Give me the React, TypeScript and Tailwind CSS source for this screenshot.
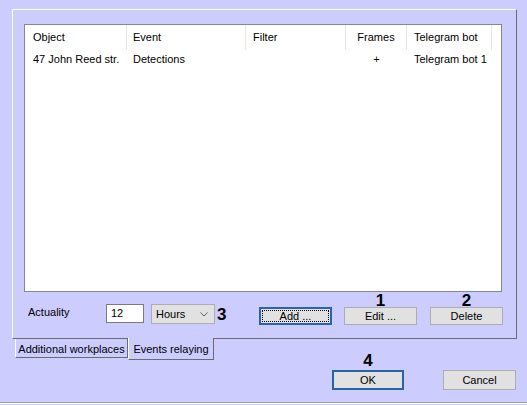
import React from 'react'

const columns = [
  { title: 'Object', width: 'w-[102px]', align: 'pl-[8px] text-left' },
  { title: 'Event', width: 'w-[119px]', align: 'pl-[6px] text-left' },
  { title: 'Filter', width: 'w-[100px]', align: 'pl-[7px] text-left' },
  { title: 'Frames', width: 'w-[61px]', align: 'text-center' },
  { title: 'Telegram bot', width: 'w-[85px]', align: 'pl-[7px] text-left' },
]

const rows = [['47 John Reed str.', 'Detections', '', '+', 'Telegram bot 1']]

function Marker({ n, top }: { n: string; top: string }) {
  return (
    <span
      className={`absolute left-1/2 -translate-x-1/2 ${top} text-[17px] font-bold leading-none text-black`}
    >
      {n}
    </span>
  )
}

function Btn({
  label,
  focused,
  dotted,
}: {
  label: string
  focused?: boolean
  dotted?: boolean
}) {
  return (
    <button
      type="button"
      className={`relative h-full w-full bg-[#e1e1e1] text-[11px] leading-none text-black ${
        focused
          ? 'border border-[#2a64a8] shadow-[inset_0_0_0_1px_#2a64a8]'
          : 'border border-[#adadad]'
      }`}
    >
      {dotted && (
        <span className="absolute inset-[2px] border border-dotted border-black" />
      )}
      {label}
    </button>
  )
}

export default function App() {
  return (
    <div className="flex h-[405px] w-[527px] flex-col overflow-hidden bg-[#ccccff] font-['Liberation_Sans',Arial,sans-serif] text-[11px] text-black">
      {/* tab page */}
      <div className="ml-[12px] mt-[9px] flex h-[330px] w-[505px] flex-col border-b border-l border-r border-t border-b-[#6b6b6b] border-l-white border-r-[#6b6b6b] border-t-white pl-[11px] pt-[14px]">
        {/* list view */}
        <div className="h-[268px] w-[478px] border border-[#828790] bg-white">
          <div className="flex h-[25px] items-center">
            {columns.map((c) => (
              <div
                key={c.title}
                className={`${c.width} ${c.align} flex h-full shrink-0 items-center border-r border-[#e5e5e5] ${
                  c.align.includes('center') ? 'justify-center' : ''
                }`}
              >
                {c.title}
              </div>
            ))}
          </div>
          {rows.map((r, i) => (
            <div key={i} className="flex h-[18px] items-center">
              {r.map((cell, j) => (
                <div
                  key={j}
                  className={`${columns[j].width} ${columns[j].align} shrink-0 whitespace-nowrap`}
                >
                  {cell}
                </div>
              ))}
            </div>
          ))}
        </div>

        {/* controls */}
        <div className="mt-[12px] flex h-[21px] items-start">
          <span className="ml-[4px] h-[17px] w-[78px] leading-[17px]">Actuality</span>
          <div className="flex h-[19px] w-[38px] items-center border border-[#7a7a7a] bg-white pl-[4px]">
            12
          </div>
          <div className="ml-[7px] flex h-[20px] w-[64px] items-center justify-between border border-[#adadad] bg-[#e1e1e1] pl-[4px] pr-[6px]">
            <span>Hours</span>
            <svg width="8" height="5" viewBox="0 0 8 5" fill="none">
              <polyline points="0.5,0.5 4,4 7.5,0.5" stroke="#606060" strokeWidth="1" />
            </svg>
          </div>
          <span className="ml-[2px] mt-[2px] w-[10px] text-[17px] font-bold leading-none">3</span>
          <div className="ml-[32px] mt-[3px] h-[18px] w-[73px]">
            <Btn label="Add ..." focused dotted />
          </div>
          <div className="relative ml-[12px] mt-[3px] h-[18px] w-[73px]">
            <Marker n="1" top="-top-[15px]" />
            <Btn label="Edit ..." />
          </div>
          <div className="relative ml-[13px] mt-[3px] h-[18px] w-[73px]">
            <Marker n="2" top="-top-[15px]" />
            <Btn label="Delete" />
          </div>
        </div>
      </div>

      {/* tabs */}
      <div className="ml-[15px] flex items-start">
        <div className="flex h-[19px] w-[113px] items-center justify-center border-b border-l border-r border-b-[#6b6b6b] border-l-white border-r-[#6b6b6b] pt-[2px] whitespace-nowrap">
          Additional workplaces
        </div>
        <div className="relative -mt-px flex h-[22px] w-[86px] items-center justify-center border-b border-l border-r border-b-[#6b6b6b] border-l-white border-r-[#6b6b6b] bg-[#ccccff] pt-[1px] whitespace-nowrap">
          Events relaying
        </div>
      </div>

      {/* dialog buttons */}
      <div className="mt-[10px] flex h-[20px] justify-end pr-[11px]">
        <div className="relative h-full w-[72px]">
          <Marker n="4" top="-top-[18px]" />
          <Btn label="OK" focused />
        </div>
        <div className="ml-[39px] h-full w-[73px]">
          <Btn label="Cancel" />
        </div>
      </div>

      <div className="mt-[12px] h-px w-full bg-[#a0a0a0]" />
      <div className="h-px w-full bg-white" />
    </div>
  )
}
